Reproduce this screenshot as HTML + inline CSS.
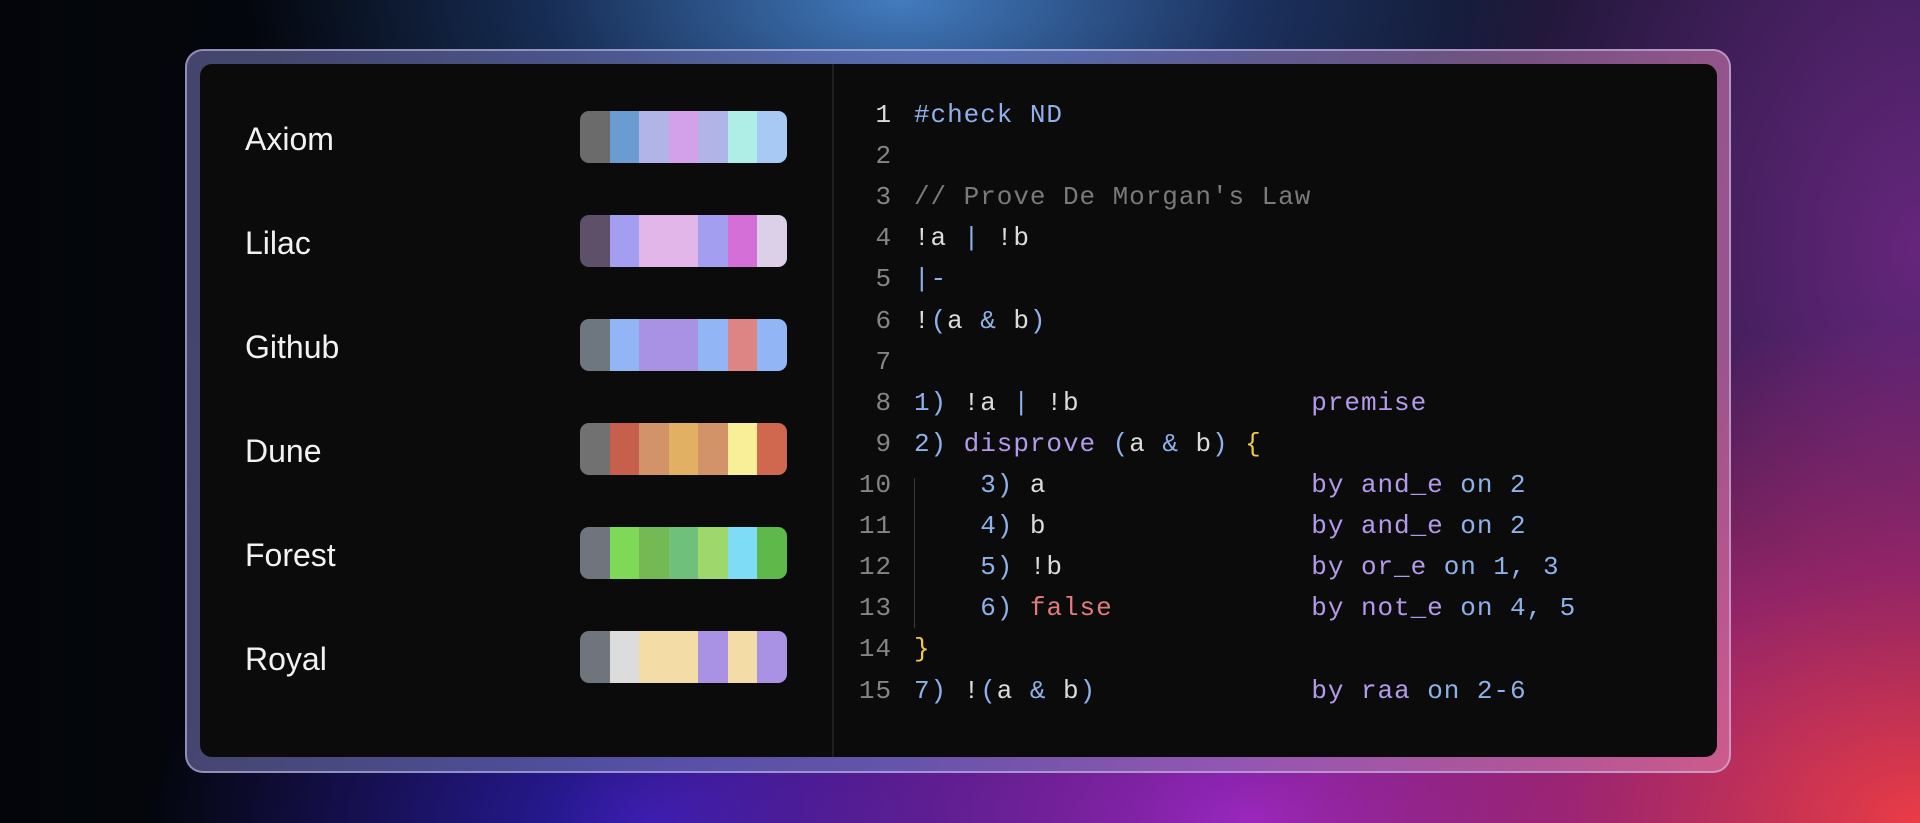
<!DOCTYPE html>
<html><head><meta charset="utf-8"><style>
html,body{margin:0;padding:0}
body{width:1920px;height:823px;overflow:hidden;position:relative;
background:
radial-gradient(ellipse 650px 300px at 900px 0px, rgba(70,130,200,0.95), rgba(40,80,150,0.5) 55%, transparent 100%),
radial-gradient(ellipse 700px 500px at 1920px 823px, rgba(235,60,70,1), rgba(200,40,110,0.6) 50%, transparent 100%),
radial-gradient(ellipse 700px 420px at 1250px 823px, rgba(160,40,200,0.95), transparent 100%),
radial-gradient(ellipse 500px 300px at 650px 823px, rgba(50,30,190,0.9), transparent 100%),
radial-gradient(ellipse 500px 700px at 1920px 250px, rgba(120,40,140,0.8), transparent 100%),
linear-gradient(90deg,#03050a 0%,#060a14 40%,#1a1a3a 100%);}
.frame{position:absolute;left:185px;top:49px;width:1546px;height:724px;border-radius:18px;
background:linear-gradient(100deg,rgba(90,90,140,0.75),rgba(110,120,190,0.6) 50%,rgba(220,120,170,0.6));
box-shadow:inset 0 0 0 2px rgba(210,200,240,0.55);}
.panel{position:absolute;left:200px;top:64px;width:1517px;height:693px;border-radius:12px;background:#0b0b0b;}
.div{position:absolute;left:632px;top:0;width:2px;height:693px;background:#1f1f1f}
.lab{position:absolute;left:45px;font:32px "Liberation Sans",sans-serif;color:#f2f2f2;}
.sw{position:absolute;left:380px;width:207px;height:52px;border-radius:9px;overflow:hidden;display:flex}
.sw i{flex:1;display:block}
.code{position:absolute;left:0;top:22px;font-family:"Liberation Mono",monospace;font-size:26px;letter-spacing:0.95px;white-space:pre}
.ln{position:absolute;width:64px;text-align:right;color:#858585}
.tx{position:absolute;left:714px;color:#dcdcdc}
.b{color:#8fb1ea}.p{color:#b39aea}.g{color:#7a7a7a}.r{color:#e07c7c}.y{color:#f1c945}.w{color:#dcdcdc}
</style></head><body>
<div class="frame"></div>
<div class="panel">
<div class="div"></div>
<div class="lab" style="top:57px">Axiom</div>
<div class="sw" style="top:47px"><i style="background:#6b6b6b"></i><i style="background:#6a9bd1"></i><i style="background:#b0b4e6"></i><i style="background:#d2a1ea"></i><i style="background:#b0b4e6"></i><i style="background:#aeeee6"></i><i style="background:#a9c9f5"></i></div>
<div class="lab" style="top:161px">Lilac</div>
<div class="sw" style="top:151px"><i style="background:#5d5068"></i><i style="background:#a39ef0"></i><i style="background:#e2b6e8"></i><i style="background:#e2b6e8"></i><i style="background:#a39ef0"></i><i style="background:#d46fd8"></i><i style="background:#dcd0e8"></i></div>
<div class="lab" style="top:265px">Github</div>
<div class="sw" style="top:255px"><i style="background:#6e7780"></i><i style="background:#92b5f5"></i><i style="background:#a991e3"></i><i style="background:#a991e3"></i><i style="background:#92b5f5"></i><i style="background:#dd8484"></i><i style="background:#92b5f5"></i></div>
<div class="lab" style="top:369px">Dune</div>
<div class="sw" style="top:359px"><i style="background:#717171"></i><i style="background:#c65f4c"></i><i style="background:#d29368"></i><i style="background:#e1b063"></i><i style="background:#d29368"></i><i style="background:#f8ef98"></i><i style="background:#d0684f"></i></div>
<div class="lab" style="top:473px">Forest</div>
<div class="sw" style="top:463px"><i style="background:#6e757c"></i><i style="background:#7ed957"></i><i style="background:#75b955"></i><i style="background:#6fc07a"></i><i style="background:#9ed86c"></i><i style="background:#7edcf6"></i><i style="background:#5fb84a"></i></div>
<div class="lab" style="top:577px">Royal</div>
<div class="sw" style="top:567px"><i style="background:#6e757c"></i><i style="background:#dcdcdc"></i><i style="background:#f4dca6"></i><i style="background:#f4dca6"></i><i style="background:#a991e3"></i><i style="background:#f4dca6"></i><i style="background:#a991e3"></i></div>
<div style="position:absolute;left:714px;top:414px;width:1px;height:150px;background:#3a3a3a"></div>
<div class="code">
<div class="ln" style="left:628px;top:14px;color:#dcdcdc">1</div><div class="tx b" style="top:14px">#check ND</div>
<div class="ln" style="left:628px;top:55px">2</div>
<div class="ln" style="left:628px;top:96px">3</div><div class="tx g" style="top:96px">// Prove De Morgan's Law</div>
<div class="ln" style="left:628px;top:137px">4</div><div class="tx" style="top:137px">!a <span class="b">|</span> !b</div>
<div class="ln" style="left:628px;top:178px">5</div><div class="tx b" style="top:178px">|-</div>
<div class="ln" style="left:628px;top:220px">6</div><div class="tx" style="top:220px">!<span class="b">(</span>a <span class="b">&amp;</span> b<span class="b">)</span></div>
<div class="ln" style="left:628px;top:261px">7</div>
<div class="ln" style="left:628px;top:302px">8</div><div class="tx" style="top:302px"><span class="b">1)</span> !a <span class="b">|</span> !b              <span class="p">premise</span></div>
<div class="ln" style="left:628px;top:343px">9</div><div class="tx" style="top:343px"><span class="b">2)</span> <span class="p">disprove</span> <span class="b">(</span>a <span class="b">&amp;</span> b<span class="b">)</span> <span class="y">{</span></div>
<div class="ln" style="left:628px;top:384px">10</div><div class="tx" style="top:384px">    <span class="b">3)</span> a                <span class="p">by and_e</span> <span class="b">on 2</span></div>
<div class="ln" style="left:628px;top:425px">11</div><div class="tx" style="top:425px">    <span class="b">4)</span> b                <span class="p">by and_e</span> <span class="b">on 2</span></div>
<div class="ln" style="left:628px;top:466px">12</div><div class="tx" style="top:466px">    <span class="b">5)</span> !b               <span class="p">by or_e</span> <span class="b">on 1, 3</span></div>
<div class="ln" style="left:628px;top:507px">13</div><div class="tx" style="top:507px">    <span class="b">6)</span> <span class="r">false</span>            <span class="p">by not_e</span> <span class="b">on 4, 5</span></div>
<div class="ln" style="left:628px;top:548px">14</div><div class="tx y" style="top:548px">}</div>
<div class="ln" style="left:628px;top:590px">15</div><div class="tx" style="top:590px"><span class="b">7)</span> !<span class="b">(</span>a <span class="b">&amp;</span> b<span class="b">)</span>             <span class="p">by raa</span> <span class="b">on 2-6</span></div>
</div>
</div>
</body></html>
